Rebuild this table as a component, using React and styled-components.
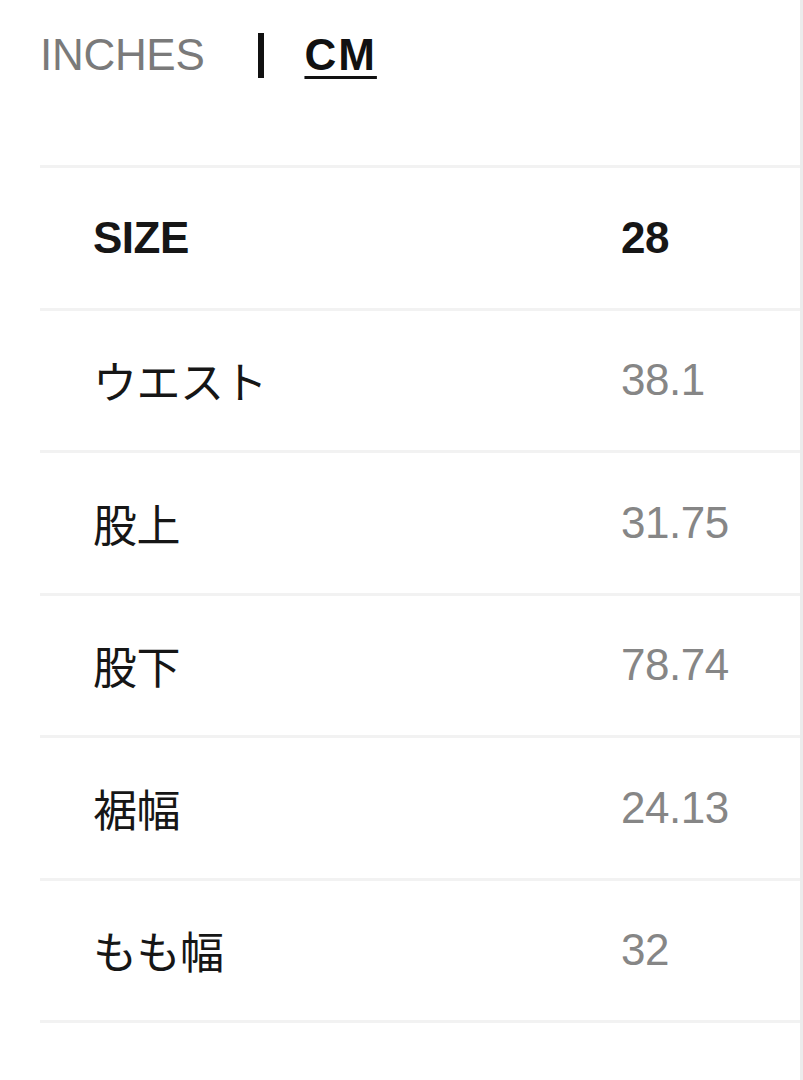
import React from "react";
import styled, { createGlobalStyle } from "styled-components";

const GlobalStyle = createGlobalStyle`
  html, body {
    margin: 0;
    padding: 0;
    background: #ffffff;
  }
  body {
    font-family: "Liberation Sans", Arial, "Noto Sans CJK JP", sans-serif;
  }
`;

const Page = styled.div`
  width: 800px;
  min-height: 1080px;
  border-right: 3px solid #ececec;
  background: #fff;
`;

const UnitBar = styled.div`
  display: flex;
  align-items: center;
  height: 110px;
  padding-left: 40px;
  font-size: 44px;
  letter-spacing: -0.3px;
`;

const Unit = styled.span`
  color: ${(p) => (p.active ? "#111" : "#7a7a7a")};
  font-weight: ${(p) => (p.active ? 700 : 400)};
  letter-spacing: ${(p) => (p.active ? "2px" : "-0.3px")};
  text-decoration: ${(p) => (p.active ? "underline" : "none")};
  text-decoration-thickness: 3px;
  text-underline-offset: 6px;
`;

const Divider = styled.span`
  display: inline-block;
  width: 6px;
  height: 45px;
  background: #111;
  margin: 0 40px 0 54px;
`;

const Table = styled.div`
  margin: 55px 0 0 40px;
  border-top: 3px solid #f2f2f2;
`;

const Row = styled.div`
  display: grid;
  grid-template-columns: 528px 1fr;
  align-items: center;
  height: 139.5px;
  padding-left: 53px;
  border-bottom: 3px solid #f2f2f2;
  font-size: 44px;
  letter-spacing: -0.5px;
`;

const Label = styled.span`
  color: #161616;
  font-weight: ${(p) => (p.head ? 700 : 400)};
  font-family: "Liberation Sans", Arial, "Noto Sans CJK JP", sans-serif;
`;

const Value = styled.span`
  color: ${(p) => (p.head ? "#161616" : "#868686")};
  font-weight: ${(p) => (p.head ? 700 : 400)};
`;

const rows = [
  ["SIZE", "28", true],
  ["ウエスト", "38.1"],
  ["股上", "31.75"],
  ["股下", "78.74"],
  ["裾幅", "24.13"],
  ["もも幅", "32"],
];

export default function App() {
  return (
    <>
      <GlobalStyle />
      <Page>
        <UnitBar>
          <Unit>INCHES</Unit>
          <Divider />
          <Unit active>CM</Unit>
        </UnitBar>
        <Table>
          {rows.map(([label, value, head]) => (
            <Row key={label}>
              <Label head={head}>{label}</Label>
              <Value head={head}>{value}</Value>
            </Row>
          ))}
        </Table>
      </Page>
    </>
  );
}
